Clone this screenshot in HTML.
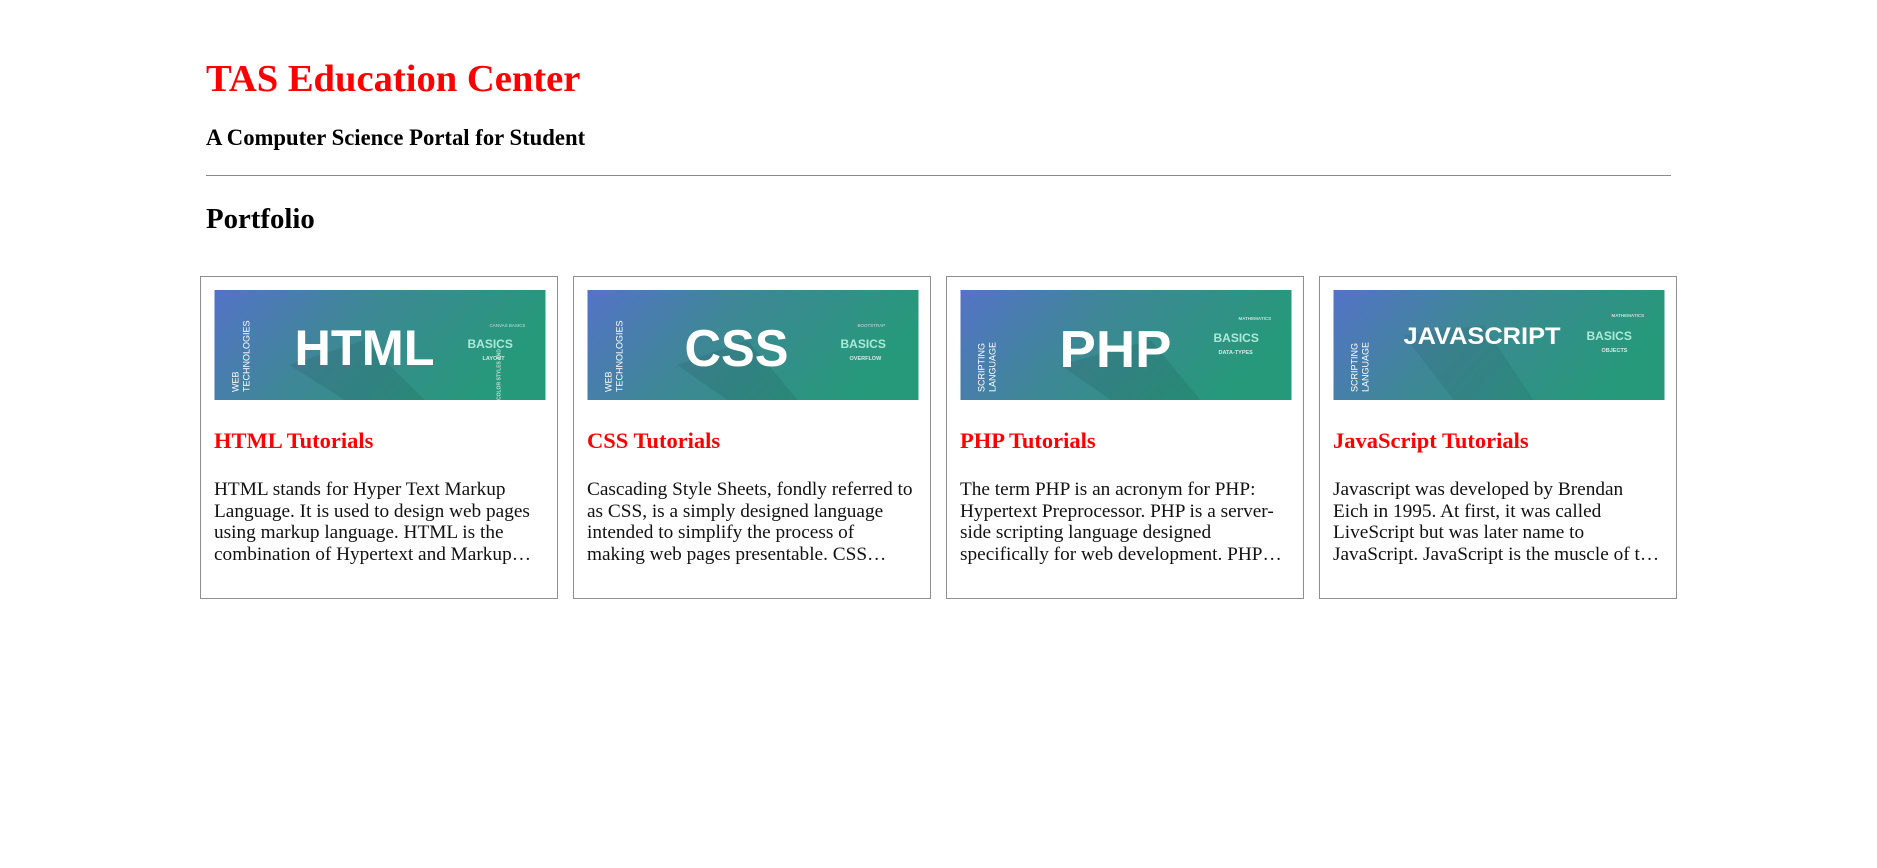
<!DOCTYPE html>
<html><head><meta charset="utf-8">
<style>
*{margin:0;padding:0;box-sizing:border-box}
body{width:1877px;height:868px;background:#fff;position:relative;font-family:"Liberation Serif","Times New Roman",serif;overflow:hidden}
.a{position:absolute;white-space:nowrap}
h1{position:absolute;left:206px;top:60px;font-size:38.6px;line-height:38.4px;color:#f00;font-weight:bold;white-space:nowrap}
.sub{left:206px;top:127px;font-size:22.7px;line-height:22.5px;font-weight:bold;color:#000}
.hr{left:206px;top:175px;width:1465px;height:0;border-top:1px solid #8a8a8a}
.pf{left:206px;top:205px;font-size:28.8px;line-height:28.8px;font-weight:bold}
.card{position:absolute;top:276px;width:358px;height:323px;border:1px solid #8f8f8f}
.card svg{position:absolute;left:13px;top:13px;width:332px;height:110px}
.card .t{position:absolute;left:13px;top:153px;font-size:22.5px;line-height:22.5px;font-weight:bold;color:#f00;white-space:nowrap}
.card .p{position:absolute;left:13px;top:202px;font-size:19.3px;line-height:21.6px;color:#111;white-space:nowrap}
</style></head><body>
<h1>TAS Education Center</h1>
<div class="a sub">A Computer Science Portal for Student</div>
<div class="a hr"></div>
<div class="a pf">Portfolio</div>

<svg width="0" height="0" style="position:absolute">
<defs>
<linearGradient id="g" x1="0" y1="0" x2="1" y2="0.3">
<stop offset="0" stop-color="#5473c8"/><stop offset="0.45" stop-color="#3e8796"/><stop offset="1" stop-color="#26997a"/>
</linearGradient>
</defs></svg>

<div class="card" style="left:200px">
<svg viewBox="0 0 331 110"><rect width="331" height="110" fill="url(#g)"/>
<polygon points="75,75 130,110 210,110 150,50" fill="#000" opacity="0.08"/>
<text transform="translate(24,102) rotate(-90)" font-family="Liberation Sans" font-size="9" fill="#fff">WEB</text>
<text transform="translate(35,102) rotate(-90)" font-family="Liberation Sans" font-size="9" fill="#fff">TECHNOLOGIES</text>
<text x="80" y="75" font-family="Liberation Sans" font-weight="bold" font-size="50" fill="#fff" textLength="140" lengthAdjust="spacingAndGlyphs">HTML</text>
<text x="253" y="58" font-family="Liberation Sans" font-weight="bold" font-size="12" fill="#cfe" opacity="0.8">BASICS</text>
<text x="268" y="70" font-family="Liberation Sans" font-weight="bold" font-size="5.5" fill="#fff" opacity="0.8">LAYOUT</text>
<text x="275" y="37" font-family="Liberation Sans" font-size="4.5" fill="#fff" opacity="0.7">CANVAS BASICS</text>
<text transform="translate(286,110) rotate(-90)" font-family="Liberation Sans" font-weight="bold" font-size="5" fill="#fff" opacity="0.7">COLOR STYLES AND</text>
</svg>
<div class="t">HTML Tutorials</div>
<div class="p">HTML stands for Hyper Text Markup<br>Language. It is used to design web pages<br>using markup language. HTML is the<br>combination of Hypertext and Markup…</div>
</div>

<div class="card" style="left:573px">
<svg viewBox="0 0 331 110"><rect width="331" height="110" fill="url(#g)"/>
<polygon points="90,75 140,110 210,110 160,50" fill="#000" opacity="0.08"/>
<text transform="translate(24,102) rotate(-90)" font-family="Liberation Sans" font-size="9" fill="#fff">WEB</text>
<text transform="translate(35,102) rotate(-90)" font-family="Liberation Sans" font-size="9" fill="#fff">TECHNOLOGIES</text>
<text x="97" y="76" font-family="Liberation Sans" font-weight="bold" font-size="52" fill="#fff" textLength="104" lengthAdjust="spacingAndGlyphs">CSS</text>
<text x="253" y="58" font-family="Liberation Sans" font-weight="bold" font-size="12" fill="#cfe" opacity="0.8">BASICS</text>
<text x="262" y="70" font-family="Liberation Sans" font-weight="bold" font-size="5.5" fill="#fff" opacity="0.8">OVERFLOW</text>
<text x="270" y="37" font-family="Liberation Sans" font-size="4.5" fill="#fff" opacity="0.7">BOOTSTRAP</text>
</svg>
<div class="t">CSS Tutorials</div>
<div class="p">Cascading Style Sheets, fondly referred to<br>as CSS, is a simply designed language<br>intended to simplify the process of<br>making web pages presentable. CSS…</div>
</div>

<div class="card" style="left:946px">
<svg viewBox="0 0 331 110"><rect width="331" height="110" fill="url(#g)"/>
<polygon points="100,75 150,110 240,110 190,50" fill="#000" opacity="0.08"/>
<text transform="translate(24,102) rotate(-90)" font-family="Liberation Sans" font-size="9" fill="#fff">SCRIPTING</text>
<text transform="translate(35,102) rotate(-90)" font-family="Liberation Sans" font-size="9" fill="#fff">LANGUAGE</text>
<text x="99" y="77" font-family="Liberation Sans" font-weight="bold" font-size="52" fill="#fff" textLength="112" lengthAdjust="spacingAndGlyphs">PHP</text>
<text x="253" y="52" font-family="Liberation Sans" font-weight="bold" font-size="12" fill="#cfe" opacity="0.8">BASICS</text>
<text x="258" y="64" font-family="Liberation Sans" font-weight="bold" font-size="5.5" fill="#fff" opacity="0.8">DATA-TYPES</text>
<text x="278" y="30" font-family="Liberation Sans" font-weight="bold" font-size="4.5" fill="#fff" opacity="0.7">MATHEMATICS</text>
</svg>
<div class="t">PHP Tutorials</div>
<div class="p">The term PHP is an acronym for PHP:<br>Hypertext Preprocessor. PHP is a server-<br>side scripting language designed<br>specifically for web development. PHP…</div>
</div>

<div class="card" style="left:1319px">
<svg viewBox="0 0 331 110"><rect width="331" height="110" fill="url(#g)"/>
<polygon points="70,45 120,110 200,110 150,35" fill="#000" opacity="0.06"/>
<text transform="translate(24,102) rotate(-90)" font-family="Liberation Sans" font-size="9" fill="#fff">SCRIPTING</text>
<text transform="translate(35,102) rotate(-90)" font-family="Liberation Sans" font-size="9" fill="#fff">LANGUAGE</text>
<text x="70" y="54" font-family="Liberation Sans" font-weight="bold" font-size="24" fill="#fff" textLength="157" lengthAdjust="spacingAndGlyphs">JAVASCRIPT</text>
<text x="253" y="50" font-family="Liberation Sans" font-weight="bold" font-size="12" fill="#cfe" opacity="0.8">BASICS</text>
<text x="268" y="62" font-family="Liberation Sans" font-weight="bold" font-size="5.5" fill="#fff" opacity="0.8">OBJECTS</text>
<text x="278" y="27" font-family="Liberation Sans" font-weight="bold" font-size="4.5" fill="#fff" opacity="0.7">MATHEMATICS</text>
</svg>
<div class="t">JavaScript Tutorials</div>
<div class="p">Javascript was developed by Brendan<br>Eich in 1995. At first, it was called<br>LiveScript but was later name to<br>JavaScript. JavaScript is the muscle of t…</div>
</div>
</body></html>
